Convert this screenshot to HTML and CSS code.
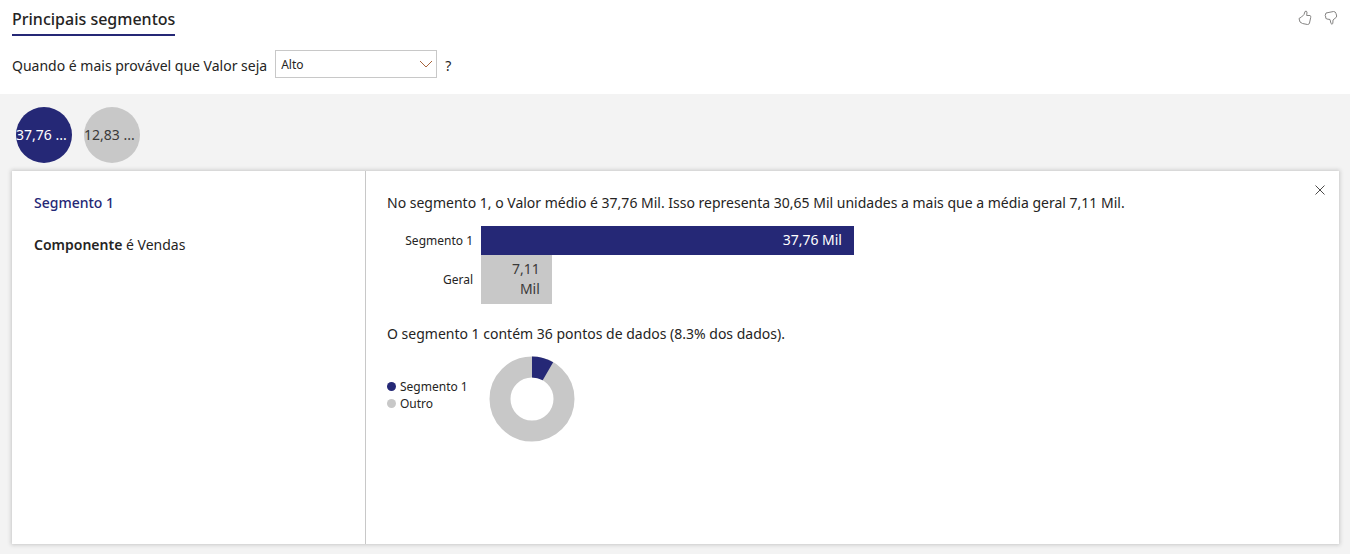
FILE: index.html
```html
<!DOCTYPE html>
<html lang="pt-BR">
<head>
<meta charset="utf-8">
<title>Principais segmentos</title>
<link rel="stylesheet" href="styles.css">
</head>
<body>
<header class="header">
  <div class="topbar">
    <h1 class="title">Principais segmentos</h1>
    <div class="feedback">
      <button class="icon-button" type="button" aria-label="Gostei">
        <svg width="14" height="16" viewBox="0 0 14 16"><path class="stroke" d="M1 8.500L3.500 7L6 4.500L7 1.500Q8.500 .5 9 2L8.700 5.500H12Q13.300 6 12.700 7.500L11.500 13Q11 14.700 9.500 14.500L4.500 13.500L2 12Z"/></svg>
      </button>
      <button class="icon-button" type="button" aria-label="Não gostei">
        <svg width="14" height="16" viewBox="0 0 14 16"><path class="stroke" d="M2 3L9.500 1.500Q11.500 1.500 12 3.500L12.700 6Q12.700 7.500 11 8.300L9 10L8.800 13.500Q8 15 7 13.500L6 9.500L3 9Q1 8.500 1.800 7L1.200 5.500Z"/></svg>
      </button>
    </div>
  </div>
  <div class="question">
    <label class="question-text" for="level">Quando é mais provável que Valor seja</label>
    <span class="select-wrap">
      <select class="select" id="level"><option>Alto</option><option>Baixo</option></select>
      <svg class="chevron" width="14" height="8" viewBox="0 0 14 8"><path d="M1 1L7 7L13 1"/></svg>
    </span>
    <span class="question-text">?</span>
  </div>
</header>
<main class="main">
  <div class="bubbles">
    <button class="bubble bubble-active" type="button">37,76 ...</button>
    <button class="bubble" type="button">12,83 ...</button>
  </div>
  <section class="card">
    <div class="summary">
      <h2 class="segment-name">Segmento 1</h2>
      <p class="rule"><strong>Componente</strong> é Vendas</p>
    </div>
    <div class="details">
      <button class="close" type="button" aria-label="Fechar">
        <svg width="10" height="10" viewBox="0 0 10 10"><path d="M.5 .5L9.500 9.500M9.500 .5L.5 9.500"/></svg>
      </button>
      <p class="sentence">No segmento 1, o Valor médio é 37,76 Mil. Isso representa 30,65 Mil unidades a mais que a média geral 7,11 Mil.</p>
      <div class="bars">
        <span class="bar-label">Segmento 1</span>
        <div class="track"><div class="bar bar-segment" style="width:100%">37,76 Mil</div></div>
        <span class="bar-label">Geral</span>
        <div class="track"><div class="bar" style="width:19%">7,11 Mil</div></div>
      </div>
      <p class="sentence">O segmento 1 contém 36 pontos de dados (8.3% dos dados).</p>
      <div class="share">
        <ul class="legend">
          <li><span class="dot dot-segment"></span>Segmento 1</li>
          <li><span class="dot"></span>Outro</li>
        </ul>
        <svg class="donut" width="86" height="86" viewBox="0 0 86 86" role="img" aria-label="8.3%">
          <circle class="ring" cx="43" cy="43" r="32"/>
          <circle class="slice" cx="43" cy="43" r="32" pathLength="100" stroke-dasharray="8.3 91.7" transform="rotate(-90 43 43)"/>
        </svg>
      </div>
    </div>
  </section>
</main>
</body>
</html>
```
FILE: styles.css
```css
* {
  box-sizing: border-box;
}

body {
  margin: 0;
  min-height: 100vh;
  display: flex;
  flex-direction: column;
  background: #f3f3f3;
  color: #252423;
  font: 14px/20px "Noto Sans", "Open Sans", sans-serif;
}

h1, h2, p, ul {
  margin: 0;
  padding: 0;
}

button {
  border: 0;
  padding: 0;
  background: none;
  font: inherit;
  color: inherit;
}

.header {
  padding: 8px 12px 16px;
  background: #fff;
}

.topbar {
  display: flex;
  justify-content: space-between;
  align-items: flex-start;
}

.title {
  padding-bottom: 4px;
  border-bottom: 2px solid #252876;
  font-size: 16px;
  line-height: 22px;
  font-weight: 500;
}

.feedback {
  display: flex;
  gap: 12px;
}

.icon-button {
  display: flex;
  padding-top: 2px;
}

.stroke {
  fill: none;
  stroke: #858483;
}

.question {
  display: flex;
  align-items: center;
  gap: 8px;
  margin-top: 14px;
}

.question-text {
  padding-top: 4px;
}

.select-wrap {
  display: grid;
  align-items: center;
}

.select {
  grid-area: 1 / 1;
  width: 162px;
  height: 28px;
  padding: 2px 5px 0;
  appearance: none;
  border: 1px solid #c8c8c8;
  border-radius: 0;
  background: #fff;
  color: #252423;
  font: 12px/16px "Noto Sans", "Open Sans", sans-serif;
}

.chevron {
  grid-area: 1 / 1;
  justify-self: end;
  margin-right: 4px;
  fill: none;
  stroke: #a8643c;
  pointer-events: none;
}

.main {
  flex: 1;
  display: flex;
  flex-direction: column;
  gap: 8px;
  padding: 13px 11px 10px 12px;
}

.bubbles {
  display: flex;
  gap: 12px;
  padding-left: 4px;
}

.bubble {
  width: 56px;
  height: 56px;
  border-radius: 50%;
  background: #c8c8c8;
  color: #3b3a39;
  text-align: left;
  white-space: nowrap;
}

.bubble-active {
  background: #252876;
  color: #fff;
}

.card {
  flex: 1;
  display: flex;
  background: #fff;
  box-shadow: 0 0 4px 1px #c8c8c8;
}

.summary {
  width: 354px;
  padding: 22px;
  border-right: 1px solid #c8c8c8;
}

.segment-name {
  color: #252876;
  font-size: 14px;
  line-height: 20px;
  font-weight: 500;
}

.rule {
  margin-top: 22px;
}

.rule strong {
  font-weight: 600;
}

.details {
  flex: 1;
  position: relative;
  padding: 22px 21px;
}

.close {
  position: absolute;
  top: 14px;
  right: 14px;
  display: flex;
}

.close path {
  stroke: #4c4b4a;
}

.bars {
  display: grid;
  grid-template-columns: 86px 373px;
  column-gap: 8px;
  align-items: center;
  margin: 13px 0 20px;
}

.bar-label {
  font-size: 12px;
  text-align: right;
}

.bar {
  padding: 4px 12px 5px;
  background: #c8c8c8;
  color: #3b3a39;
  text-align: right;
}

.bar-segment {
  background: #252876;
  color: #fff;
}

.share {
  display: flex;
  align-items: center;
  gap: 21px;
  margin-top: 12px;
}

.legend {
  width: 81px;
  padding-bottom: 8px;
  list-style: none;
  font-size: 12px;
  line-height: 17px;
}

.legend li {
  display: flex;
  align-items: center;
  gap: 4px;
  white-space: nowrap;
}

.dot {
  width: 9px;
  height: 9px;
  border-radius: 50%;
  background: #c8c8c8;
}

.dot-segment {
  background: #252876;
}

.donut circle {
  fill: none;
  stroke-width: 21;
}

.ring {
  stroke: #c8c8c8;
}

.slice {
  stroke: #252876;
}
```
